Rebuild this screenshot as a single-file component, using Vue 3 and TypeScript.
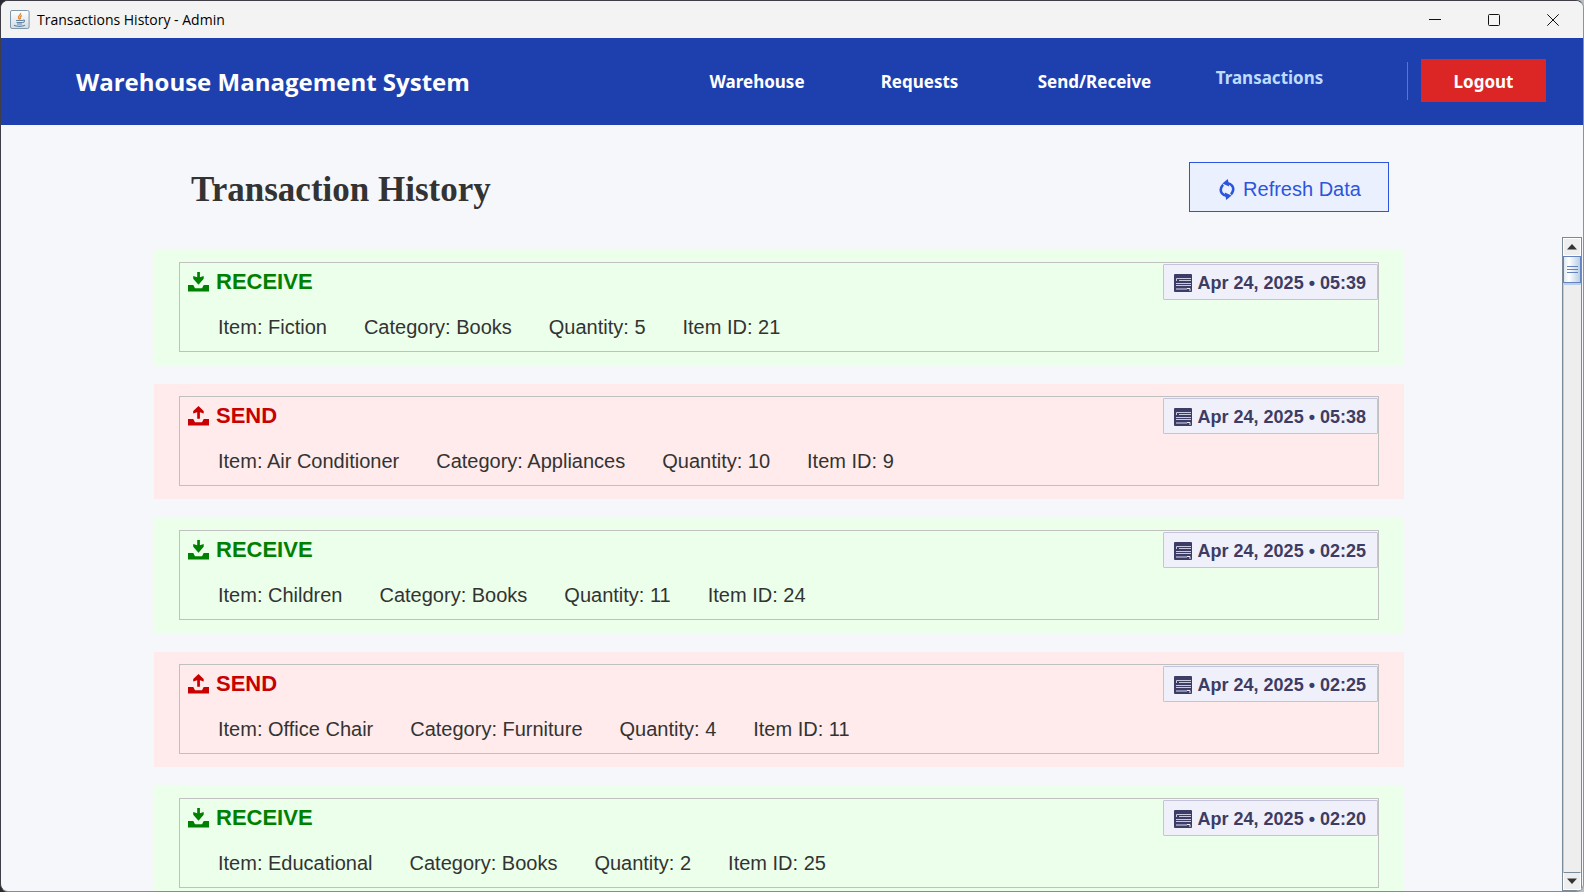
<script setup lang="ts">
type Kind = 'RECEIVE' | 'SEND'

interface Transaction {
  kind: Kind
  date: string
  item: string
  category: string
  quantity: number
  itemId: number
}

const navItems: { label: string; active?: boolean }[] = [
  { label: 'Warehouse' },
  { label: 'Requests' },
  { label: 'Send/Receive' },
  { label: 'Transactions', active: true },
]

const transactions: Transaction[] = [
  { kind: 'RECEIVE', date: 'Apr 24, 2025 • 05:39', item: 'Fiction', category: 'Books', quantity: 5, itemId: 21 },
  { kind: 'SEND', date: 'Apr 24, 2025 • 05:38', item: 'Air Conditioner', category: 'Appliances', quantity: 10, itemId: 9 },
  { kind: 'RECEIVE', date: 'Apr 24, 2025 • 02:25', item: 'Children', category: 'Books', quantity: 11, itemId: 24 },
  { kind: 'SEND', date: 'Apr 24, 2025 • 02:25', item: 'Office Chair', category: 'Furniture', quantity: 4, itemId: 11 },
  { kind: 'RECEIVE', date: 'Apr 24, 2025 • 02:20', item: 'Educational', category: 'Books', quantity: 2, itemId: 25 },
]
</script>

<template>
  <div class="window">
    <header class="titlebar">
      <svg class="app-icon" viewBox="0 0 20 20" aria-hidden="true">
        <defs>
          <linearGradient id="tile" x1="0" y1="0" x2="0" y2="1">
            <stop offset="0" stop-color="#ffffff" />
            <stop offset="1" stop-color="#d3dce4" />
          </linearGradient>
        </defs>
        <rect x="0.5" y="0.5" width="18.6" height="18" rx="1.5" fill="url(#tile)" stroke="#7f97aa" />
        <path d="M10.5 3c1.2 1.8-3.2 3-2 5 .3.6.9 1 1.2 1.6M12 5.6c-2 .8-2.4 1.8-1.2 3.4" fill="none" stroke="#e58a3a" stroke-width="1.3" />
        <path d="M6 10.5h7M6.5 12.5h6M7 14h5M13 10.2c2.2-.4 2 1.8-.3 2.4" fill="none" stroke="#5f86a5" stroke-width="1.1" />
        <path d="M4 15.3c2 1.4 8.5 1.4 11 0" fill="none" stroke="#5f86a5" stroke-width="1.2" />
      </svg>
      <span class="window-title">Transactions History - Admin</span>
      <div class="window-controls">
        <button type="button" aria-label="Minimize">
          <svg viewBox="0 0 12 12"><path d="M0 5.5h12" /></svg>
        </button>
        <button type="button" aria-label="Maximize">
          <svg viewBox="0 0 12 12"><rect x="0.5" y="0.5" width="11" height="11" rx="1" /></svg>
        </button>
        <button type="button" aria-label="Close">
          <svg viewBox="0 0 12 12"><path d="M0.3 0.3l11.4 11.4M11.7 0.3L0.3 11.7" /></svg>
        </button>
      </div>
    </header>

    <div class="navbar">
      <div class="brand">Warehouse Management System</div>
      <nav class="nav-links">
        <a v-for="n in navItems" :key="n.label" href="#" :class="{ active: n.active }">{{ n.label }}</a>
      </nav>
      <div class="divider"></div>
      <button type="button" class="logout">Logout</button>
    </div>

    <div class="page-head">
      <div class="page-head-inner">
        <h1>Transaction History</h1>
        <button type="button" class="refresh">
          <svg viewBox="0 0 16 21" aria-hidden="true">
            <path class="arc" d="M8.500 4.200C12.500 4.600 15 8 14 11.600c-.4 1.600-1.100 2.800-2.200 3.700" />
            <path class="arc" d="M7.500 16.800C3.500 16.400 1 13 2 9.400c.4-1.600 1.100-2.800 2.200-3.700" />
            <path d="M3.400 4.600L8.800 0l1.400 7.600z" />
            <path d="M12.600 16.400L7.200 21 5.800 13.400z" />
          </svg>
          <span>Refresh Data</span>
        </button>
      </div>
    </div>

    <main class="scroll-area">
      <div class="viewport">
        <ul class="list">
          <li v-for="(t, i) in transactions" :key="i" class="card" :class="t.kind === 'SEND' ? 'send' : 'receive'">
            <article class="card-inner">
              <div class="card-top">
                <h2 class="kind">
                  <svg viewBox="0 0 21 20" aria-hidden="true">
                    <path d="M0 13H5.3L7 16.200H14L15.700 13H21V19.500H0z" />
                    <path v-if="t.kind === 'RECEIVE'" d="M9.200 0h2.700v5.200l3.800-1.200v2.800L10.500 12.800 5.200 6.800V4l4 1.200z" />
                    <path v-else d="M9.200 12.800h2.700V6.200l3.800 1.400V5L10.500 0 5.200 5v2.600l4-1.400z" />
                  </svg>
                  <span>{{ t.kind }}</span>
                </h2>
                <div class="stamp">
                  <svg viewBox="0 0 18 18" aria-hidden="true">
                    <rect width="18" height="18" rx="1" fill="#3c3c64" />
                    <path d="M17 4.500H2.500V7M5 6.500h12M2 9.500h15M2 11.500h15" fill="none" stroke="#c9c9e0" />
                    <path d="M2 15h11" stroke="#8c8cae" stroke-width="2" />
                    <path d="M13 14.500h3V17" fill="none" stroke="#f0f0fa" />
                  </svg>
                  <time>{{ t.date }}</time>
                </div>
              </div>
              <div class="details">
                <span>Item: {{ t.item }}</span>
                <span>Category: {{ t.category }}</span>
                <span>Quantity: {{ t.quantity }}</span>
                <span>Item ID: {{ t.itemId }}</span>
              </div>
            </article>
          </li>
        </ul>
      </div>
      <div class="scrollbar">
        <button type="button" class="arrow" aria-label="Scroll up">
          <svg viewBox="0 0 10 6"><path d="M0 5.500L5 0l5 5.500z" /></svg>
        </button>
        <div class="thumb"><i></i><i></i><i></i></div>
        <div class="track"></div>
        <button type="button" class="arrow down" aria-label="Scroll down">
          <svg viewBox="0 0 10 6"><path d="M0 0.500h10L5 6z" /></svg>
        </button>
      </div>
    </main>
  </div>
</template>

<style>
body {
  margin: 0;
  background: linear-gradient(90deg, #2a2a2e 50%, #b9bec4 50%);
}
</style>

<style scoped>
* {
  box-sizing: border-box;
}

button {
  margin: 0;
  padding: 0;
  border: 0;
  cursor: pointer;
}

.window {
  display: flex;
  flex-direction: column;
  height: 100vh;
  overflow: hidden;
  border: 1px solid #3f3d45;
  border-right-color: #8f9296;
  border-bottom-color: #8a8a8a;
  border-radius: 8px;
  background: #f6f7fb;
  color: #333;
  font-family: "Liberation Sans", Arial, sans-serif;
}

.titlebar {
  display: flex;
  flex: none;
  align-items: center;
  height: 37px;
  padding-left: 9px;
  background: #f3f3f3;
  color: #000;
}

.app-icon {
  width: 20px;
  height: 20px;
}

.window-title {
  margin-left: 7px;
  font: 14px/20px "Open Sans", "Noto Sans", sans-serif;
}

.window-controls {
  display: flex;
  margin-left: auto;
  padding-right: 1px;
}

.window-controls button {
  display: grid;
  place-items: center;
  width: 59px;
  height: 36px;
  background: transparent;
}

.window-controls svg {
  width: 12px;
  height: 12px;
  fill: none;
  stroke: #111;
}

.navbar {
  display: flex;
  flex: none;
  align-items: center;
  height: 87px;
  padding: 0 37px 2px 75px;
  background: #1e40af;
  color: #fff;
  font-family: "Noto Sans", "Open Sans", sans-serif;
  font-weight: 700;
}

.brand {
  padding-top: 2px;
  font-family: "Open Sans", "Noto Sans", sans-serif;
  font-size: 24px;
  line-height: 36px;
}

.nav-links {
  display: grid;
  grid-template-columns: 150px 175px 175px 175px;
  align-items: center;
  margin-left: auto;
  padding-top: 2px;
  font-size: 17px;
  line-height: 24px;
  text-align: center;
}

.nav-links a {
  color: inherit;
  text-decoration: none;
}

.nav-links a.active {
  padding-bottom: 8px;
  color: #bfdbfe;
}

.divider {
  width: 1px;
  height: 38px;
  margin: 0 13px 0 50px;
  background: #64799f;
}

.logout {
  width: 125px;
  height: 43px;
  padding-top: 2px;
  background: #dc2626;
  color: #fff;
  font: 700 17px/24px "Noto Sans", "Open Sans", sans-serif;
}

.page-head {
  flex: none;
  padding: 37px 26px 25px 0;
}

.page-head-inner {
  display: flex;
  align-items: center;
  justify-content: space-between;
  max-width: 1250px;
  margin: 0 auto;
  padding: 0 15px 0 37px;
}

h1 {
  margin: 0;
  padding-top: 6px;
  font: 700 35px/40px "Liberation Serif", "Times New Roman", serif;
}

.refresh {
  display: flex;
  align-items: center;
  justify-content: center;
  gap: 8px;
  width: 200px;
  height: 50px;
  padding: 4px 0 0 2px;
  border: 1px solid #2b55dc;
  background: #ebf0ff;
  color: #2b55dc;
  font: 20px/24px "Liberation Sans", Arial, sans-serif;
}

.refresh svg {
  width: 16px;
  height: 21px;
  fill: currentColor;
}

.refresh .arc {
  fill: none;
  stroke: currentColor;
  stroke-width: 2.6;
}

.scroll-area {
  display: flex;
  flex: 1;
  min-height: 0;
}

.viewport {
  flex: 1;
  min-width: 0;
  overflow: hidden;
  padding: 13px 5px 0 0;
}

.list {
  display: grid;
  gap: 19px;
  max-width: 1250px;
  margin: 0 auto;
  padding: 0;
  list-style: none;
}

.card {
  padding: 12px 25px 13px;
}

.card.receive {
  background: #ebffeb;
}

.card.send {
  background: #ffebeb;
}

.card-inner {
  padding-bottom: 12px;
  border: 1px solid #c0c0c0;
}

.card-top {
  display: flex;
  align-items: center;
  justify-content: space-between;
  padding: 1px 0 0 8px;
}

.kind {
  display: flex;
  align-items: center;
  gap: 7px;
  margin: 0;
  font-size: 22px;
  line-height: 26px;
}

.kind svg {
  width: 21px;
  height: 20px;
  fill: currentColor;
}

.receive .kind {
  color: #008000;
}

.send .kind {
  color: #c80000;
}

.stamp {
  display: flex;
  align-items: center;
  gap: 6px;
  height: 36px;
  padding: 1px 11px 0 10px;
  border: 1px solid #c3c3dc;
  border-radius: 1px;
  background: #f0f0fa;
  color: #3c3c64;
  font-size: 18px;
  font-weight: 700;
  line-height: 24px;
}

.stamp svg {
  width: 18px;
  height: 18px;
}

.details {
  display: flex;
  flex-wrap: wrap;
  gap: 0 37px;
  margin-top: 15px;
  padding-left: 38px;
  font-size: 20px;
  line-height: 24px;
}

.scrollbar {
  display: flex;
  flex: none;
  flex-direction: column;
  width: 20px;
  margin-right: 1px;
  border: 1px solid #7a8a99;
  background: #eee;
}

.arrow {
  display: grid;
  flex: none;
  place-items: center;
  height: 18px;
  border: 1px solid #fff;
  background: #eee;
}

.arrow.down {
  border-top-color: #7a8a99;
}

.arrow svg {
  width: 10px;
  height: 6px;
  fill: #333;
}

.thumb {
  display: flex;
  flex: none;
  flex-direction: column;
  align-items: center;
  justify-content: center;
  gap: 2px;
  height: 27px;
  border: 1px solid #6382bf;
  background: linear-gradient(90deg, #dfe9f3, #fff 30%, #b8cfe5);
}

.thumb i {
  width: 11px;
  height: 1px;
  background: #6382bf;
}

.track {
  flex: 1;
  border-top: 2px solid #b8cfe5;
  border-left: 1px solid #b8cfe5;
}
</style>
